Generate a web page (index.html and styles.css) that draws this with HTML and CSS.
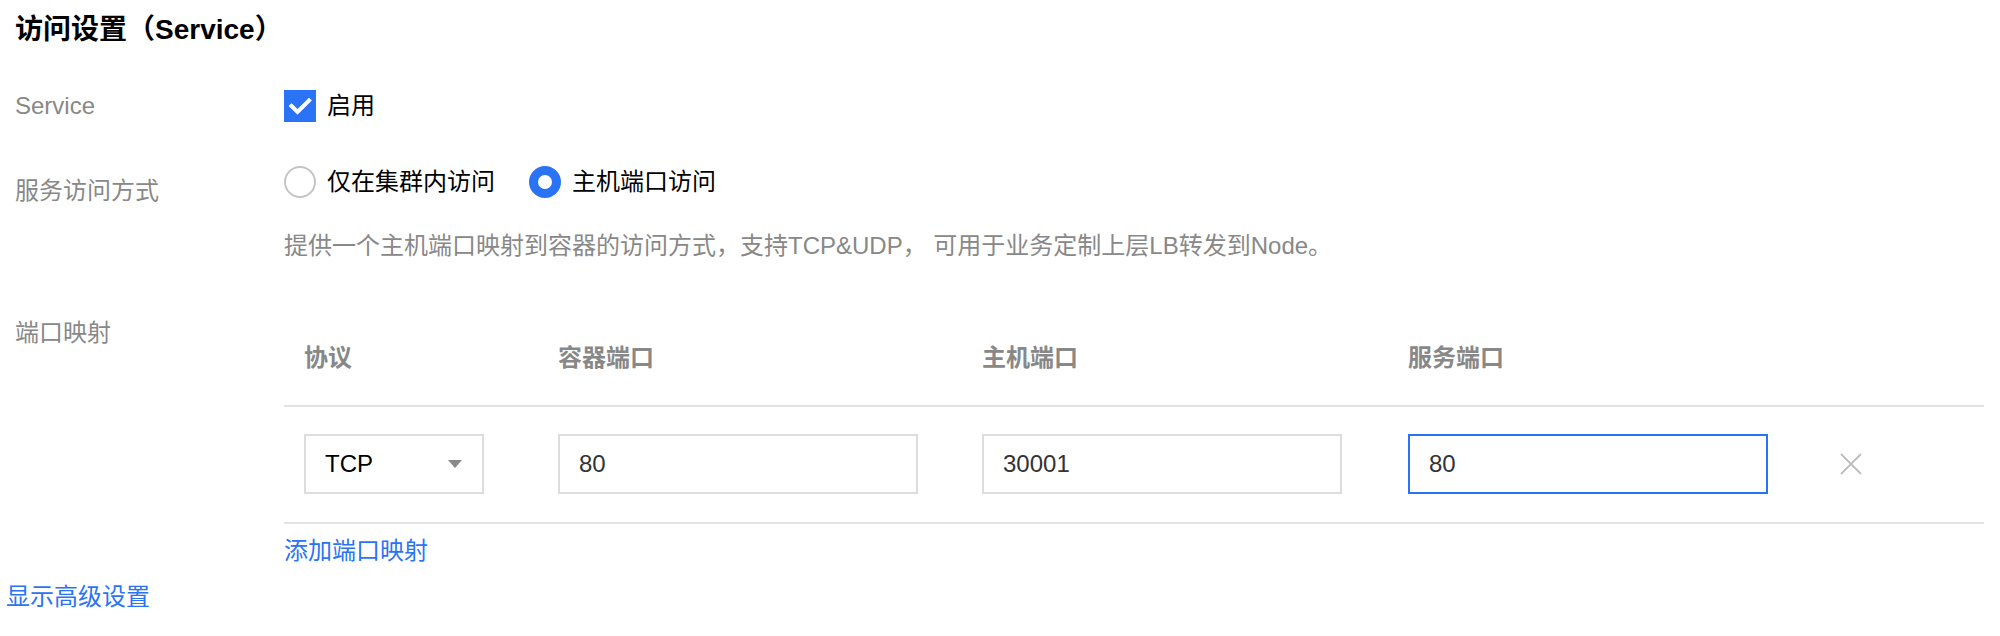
FILE: index.html
```html
<!DOCTYPE html>
<html lang="zh-CN">
<head>
<meta charset="utf-8">
<title>访问设置</title>
<link rel="stylesheet" href="styles.css">
</head>
<body>
<div class="page">
  <h2 class="title">访问设置（Service）</h2>

  <div class="row row-service">
    <div class="label">Service</div>
    <div class="ctrl">
      <label class="check">
        <span class="check-box">
          <svg width="32" height="32" viewBox="0 0 32 32"><polyline points="7.5,16 13.5,22 25,10.5" fill="none" stroke="#fff" stroke-width="4" stroke-linecap="square"/></svg>
        </span>
        <span class="check-text">启用</span>
      </label>
    </div>
  </div>

  <div class="row row-type">
    <div class="label label-offset">服务访问方式</div>
    <div class="ctrl">
      <div class="radios">
        <label class="radio"><span class="radio-dot"></span><span class="radio-text">仅在集群内访问</span></label>
        <label class="radio"><span class="radio-dot is-checked"></span><span class="radio-text">主机端口访问</span></label>
      </div>
      <p class="help">提供一个主机端口映射到容器的访问方式，支持TCP&amp;UDP， 可用于业务定制上层LB转发到Node。</p>
    </div>
  </div>

  <div class="row row-ports">
    <div class="label">端口映射</div>
    <div class="ctrl">
      <div class="ptable">
        <div class="prow phead">
          <div class="pcell">协议</div>
          <div class="pcell">容器端口</div>
          <div class="pcell">主机端口</div>
          <div class="pcell">服务端口</div>
          <div class="pcell"></div>
        </div>
        <div class="prow pbody">
          <div class="pcell">
            <div class="select"><span>TCP</span><span class="caret"></span></div>
          </div>
          <div class="pcell"><div class="input">80</div></div>
          <div class="pcell"><div class="input">30001</div></div>
          <div class="pcell"><div class="input is-focus">80</div></div>
          <div class="pcell pcell-x">
            <svg class="remove" width="22" height="22" viewBox="0 0 22 22"><path d="M1 1 L21 21 M21 1 L1 21" stroke="#bdbdbd" stroke-width="1.8" fill="none"/></svg>
          </div>
        </div>
      </div>
      <a class="link add">添加端口映射</a>
    </div>
  </div>

  <a class="link advanced">显示高级设置</a>
</div>
</body>
</html>
```

FILE: styles.css
```css
html, body {
  margin: 0;
  padding: 0;
  background: #fff;
}

body {
  font-family: "Liberation Sans", "Noto Sans CJK SC", sans-serif;
  font-size: 24px;
  color: #000;
}

.page {
  width: 2000px;
}

.title {
  margin: 0;
  padding-left: 15px;
  height: 60px;
  line-height: 60px;
  font-size: 28px;
  font-weight: bold;
  color: #000;
}

.row {
  display: flex;
  align-items: flex-start;
}

.label {
  width: 269px;
  padding-left: 15px;
  flex: none;
  line-height: 32px;
  color: #888;
}

.label-offset {
  padding-top: 9px;
}

.ctrl {
  flex: 1;
}

.row-service {
  margin-top: 30px;
}

.check {
  display: flex;
  align-items: center;
  line-height: 32px;
}

.check-box {
  width: 32px;
  height: 32px;
  background: #2b73f5;
  display: block;
}

.check-box svg {
  display: block;
}

.check-text {
  margin-left: 11px;
}

.row-type {
  margin-top: 44px;
}

.radios {
  display: flex;
  align-items: center;
  height: 32px;
}

.radio {
  display: flex;
  align-items: center;
  line-height: 32px;
  margin-right: 34px;
}

.radio-dot {
  width: 32px;
  height: 32px;
  box-sizing: border-box;
  border: 2px solid #c4c4c4;
  border-radius: 50%;
  background: #fff;
}

.radio-dot.is-checked {
  border: 9px solid #2b73f5;
}

.radio-text {
  margin-left: 11px;
}

.help {
  margin: 32px 0 0;
  line-height: 32px;
  color: #888;
}

.row-ports {
  margin-top: 55px;
}

.ptable {
  width: 1700px;
}

.prow {
  display: grid;
  grid-template-columns: 254px 424px 426px 426px 170px;
  align-items: center;
}

.phead {
  padding: 25px 0 31px;
  border-bottom: 2px solid #e3e3e3;
  font-weight: bold;
  color: #888;
  line-height: 32px;
}

.pbody {
  padding: 27px 0 28px;
  border-bottom: 2px solid #e3e3e3;
}

.pcell {
  padding-left: 20px;
}

.select,
.input {
  height: 60px;
  box-sizing: border-box;
  border: 2px solid #dddddd;
  padding-left: 19px;
  line-height: 56px;
  color: #333;
  background: #fff;
}

.select {
  width: 180px;
  display: flex;
  align-items: center;
  justify-content: space-between;
  padding-right: 20px;
  color: #000;
}

.caret {
  width: 0;
  height: 0;
  border-left: 7.5px solid transparent;
  border-right: 7.5px solid transparent;
  border-top: 8px solid #888;
}

.input {
  width: 360px;
}

.input.is-focus {
  border-color: #2b73f5;
}

.pcell-x {
  padding-left: 26px;
  display: flex;
  align-items: center;
}

.remove {
  display: block;
}

.link {
  display: block;
  color: #2b73f5;
  line-height: 32px;
  cursor: pointer;
}

.add {
  margin-top: 11px;
}

.advanced {
  margin-top: 14px;
  padding-left: 6px;
}
```
